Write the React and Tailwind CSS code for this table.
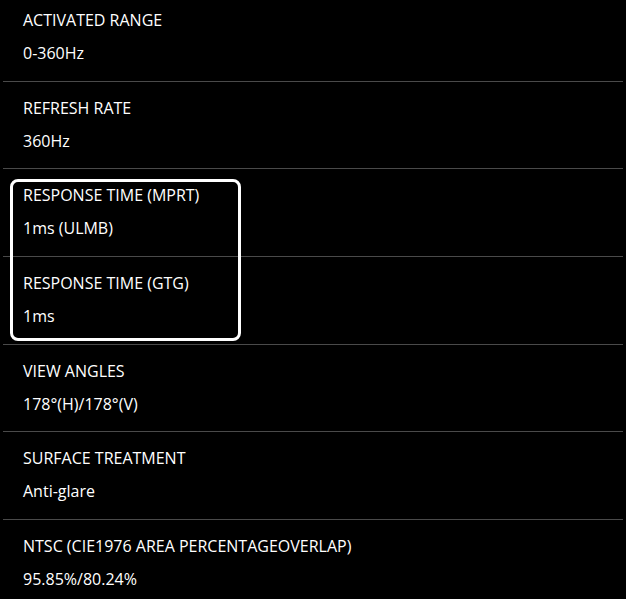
export default function App() {
  const rows = [
    ["ACTIVATED RANGE", "0-360Hz"],
    ["REFRESH RATE", "360Hz"],
    ["RESPONSE TIME (MPRT)", "1ms (ULMB)"],
    ["RESPONSE TIME (GTG)", "1ms"],
    ["VIEW ANGLES", "178°(H)/178°(V)"],
    ["SURFACE TREATMENT", "Anti-glare"],
    ["NTSC (CIE1976 AREA PERCENTAGEOVERLAP)", "95.85%/80.24%"],
  ];
  return (
    <div className="min-h-[599px] w-[626px] bg-black text-white overflow-hidden" style={{ fontFamily: "'Open Sans', sans-serif" }}>
      <div className="relative mx-[3px]">
        <div className="pointer-events-none absolute left-[7px] top-[179px] w-[231px] h-[162px] border-[3px] border-white rounded-lg" />
        {rows.map(([label, value], i) => (
          <div
            key={i}
            className={`px-[20px] pb-[15.7px] border-b border-[#4a4a4a] ${i === 0 ? "pt-[8px]" : "pt-[14px]"}`}
          >
            <div className="relative text-[16px] leading-[24px]">{label}</div>
            <div className="relative mt-[9px] text-[16px] leading-[24px]">{value}</div>
          </div>
        ))}
      </div>
    </div>
  );
}
